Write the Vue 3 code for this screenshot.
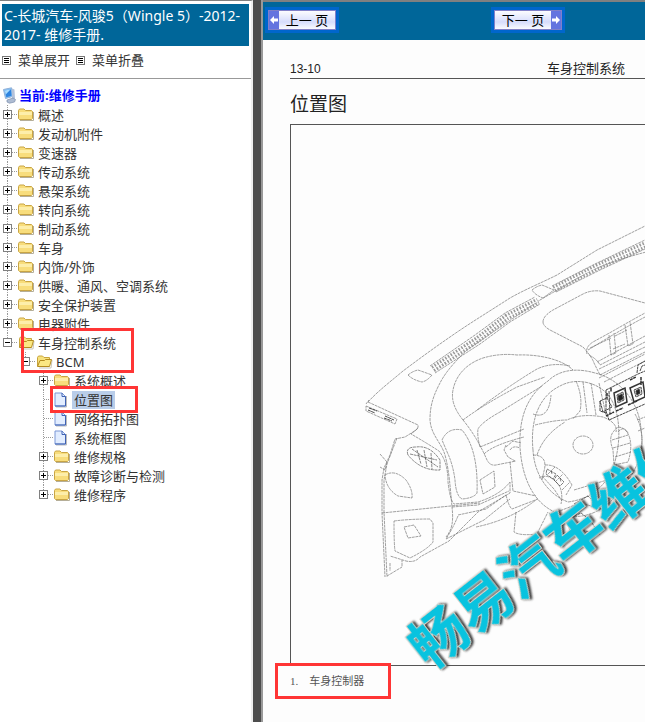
<script setup>
import { ref, computed } from 'vue'

const nodes = ref([
  ...['概述', '发动机附件', '变速器', '传动系统', '悬架系统', '转向系统', '制动系统', '车身', '内饰/外饰', '供暖、通风、空调系统', '安全保护装置', '电器附件']
    .map((label) => ({ label, depth: 0, kind: 'folder', open: false })),
  { label: '车身控制系统', depth: 0, kind: 'folder', open: true, last: true, mark: 'group' },
  { label: 'BCM', depth: 1, kind: 'folder', open: true, last: true },
  { label: '系统概述', depth: 2, kind: 'folder', open: false },
  { label: '位置图', depth: 2, kind: 'page', mark: 'item' },
  { label: '网络拓扑图', depth: 2, kind: 'page' },
  { label: '系统框图', depth: 2, kind: 'page' },
  { label: '维修规格', depth: 2, kind: 'folder', open: false },
  { label: '故障诊断与检测', depth: 2, kind: 'folder', open: false },
  { label: '维修程序', depth: 2, kind: 'folder', open: false, last: true },
])
const selected = ref('位置图')

const visible = computed(() => {
  let limit = Infinity
  return nodes.value.filter((n, i) => {
    if (n.depth > limit) return false
    const next = nodes.value[i + 1]
    limit = !n.open && next && next.depth > n.depth ? n.depth : Infinity
    return true
  })
})
function setAll(open) {
  nodes.value.forEach((n, i) => {
    const next = nodes.value[i + 1]
    if (next && next.depth > n.depth) n.open = open
  })
}
function toggle(n) {
  n.open = !n.open
}
</script>

<template>
  <div class="frames">
    <nav class="side">
      <h1 class="title">C-长城汽车-风骏5（Wingle 5）-2012-2017- 维修手册.</h1>
      <div class="tools">
        <button type="button" class="tool" @click="setAll(true)">
          <svg width="9" height="9" viewBox="0 0 9 9"><rect x=".5" y=".5" width="8" height="8" fill="#fff" stroke="#777" /><path d="M2 2.5h5M2 4.5h5M2 6.5h5" stroke="#000" /></svg>
          <span>菜单展开</span>
        </button>
        <button type="button" class="tool" @click="setAll(false)">
          <svg width="9" height="9" viewBox="0 0 9 9"><rect x=".5" y=".5" width="8" height="8" fill="#fff" stroke="#777" /><path d="M2 2.5h5M2 4.5h5M2 6.5h5" stroke="#000" /></svg>
          <span>菜单折叠</span>
        </button>
      </div>
      <div class="tree">
        <a class="root" href="#">
          <svg width="15" height="17" viewBox="0 0 15 17">
            <path d="M1.500 2.500L9.500 .8L10.500 9.500L3.500 11.500Z" fill="#8cc4f4" stroke="#8fb0d8" />
            <path d="M2.800 3.500L8.800 2.200L9.600 8.800L4.300 10.200Z" fill="#2d84e0" />
            <path d="M2.800 3.500L8.800 2.200L3.700 7.500Z" fill="#a9dcff" />
            <path d="M10 1.500l2.500 1 .5 9-3 1.500z" fill="#b4c2da" />
            <path d="M5 13l6-2 2.500 1.500-1 2.500-5 1.200-2.500-1.200z" fill="#aebcd2" stroke="#7d8fae" stroke-width=".7" />
          </svg>
          <span>当前:维修手册</span>
        </a>
        <ul class="rows">
          <li v-for="n in visible" :key="n.label" class="row" :class="'depth' + n.depth">
            <button v-if="n.kind === 'folder'" type="button" class="toggle" :aria-label="n.label" @click="toggle(n)">
              <svg width="18" height="19" viewBox="0 0 18 19">
                <path :d="n.last ? 'M7.500 0V9' : 'M7.500 0V19'" stroke="#999" stroke-dasharray="1 1" />
                <path d="M12 9.500H18" stroke="#999" stroke-dasharray="1 1" />
                <rect x="3.500" y="5.500" width="8" height="8" fill="#fff" stroke="#808080" />
                <path :d="n.open ? 'M5 9.500H10' : 'M5 9.500H10M7.500 7V12'" stroke="#000" />
              </svg>
            </button>
            <svg v-else width="18" height="19" viewBox="0 0 18 19">
              <path d="M7.500 0V19M8 9.500H18" fill="none" stroke="#999" stroke-dasharray="1 1" />
            </svg>
            <svg v-if="n.kind === 'page'" class="icon" width="18" height="17" viewBox="0 0 18 17">
              <path d="M2 16h10.500V5" fill="none" stroke="#bbb" />
              <path d="M1 2H8L11.500 5.500V15H1Z" fill="#e2edff" stroke="#7a97d6" />
              <path d="M8 2V5.500H11.500V15H1" fill="none" stroke="#3f62b4" />
            </svg>
            <svg v-else-if="n.open" class="icon" width="18" height="17" viewBox="0 0 18 17">
              <path d="M3 15h12l1-8" fill="none" stroke="#c9c5b8" />
              <path d="M1.500 13V4.500L2.500 3H6.500L8 4.500H13.500V7" fill="#f7e27e" stroke="#c8a43c" />
              <path d="M1.500 13.500L4 7.500H8.500L9.500 6.500H15.500L13.500 13.500Z" fill="#fbe883" stroke="#b48c20" />
            </svg>
            <svg v-else class="icon" width="18" height="17" viewBox="0 0 18 17">
              <path d="M2 14.500h13.500V6" fill="none" stroke="#b5ae98" />
              <path d="M.500 12.500V4.500L1.500 3H6L7.500 4.500H13.500L14.500 5.500V12.500L13.500 13.500H1.500Z" fill="#f8dd7c" stroke="#c9a544" />
              <path d="M1 6H14V9H1Z" fill="#fdeeaa" />
            </svg>
            <a href="#" class="label" :class="{ on: selected === n.label }" @click.prevent="selected = n.label">{{ n.label }}</a>
            <i v-if="n.mark" class="mark" :class="n.mark"></i>
          </li>
        </ul>
      </div>
    </nav>
    <div class="splitter"></div>
    <main class="doc">
      <div class="bar">
        <button type="button" class="pager">
          <svg width="10" height="18" viewBox="0 0 10 18"><rect width="10" height="18" fill="#6474df" /><path d="M1 9L5 5V7.500H9V10.500H5V13Z" fill="#fff" /></svg>
          <span>上一 页</span>
        </button>
        <button type="button" class="pager next">
          <span>下一 页</span>
          <svg width="10" height="18" viewBox="0 0 10 18"><rect width="10" height="18" fill="#6474df" /><path d="M9 9L5 5V7.500H1V10.500H5V13Z" fill="#fff" /></svg>
        </button>
      </div>
      <article class="sheet">
        <header class="running"><span>13-10</span><span>车身控制系统</span></header>
        <h2>位置图</h2>
        <figure>
          <svg class="drawing" width="354" height="540" viewBox="291 125 354 540">
            <g fill="none" stroke="#777" stroke-width=".7" stroke-dasharray="3 .7">
              <!-- dash top and defroster vents -->
              <path d="M368 402C378 391 390 382 403 371C419 359 434 348 450 337C470 323 490 311 510 298C526 289 541 283 557 275L597 250L645 226" />
              <path d="M646 252C620 259 606 264 590 271L540 300L493 332C475 345 465 350 460 357C449 368 443 377 440 383C432 398 430 408 430 420C431 435 441 442 445 455C449 470 450 485 452 507C454 524 451 531 446 537" />
              <path d="M408 375Q413 371 418 370L432 375Q427 381 422 382Q413 380 408 375M532 290Q537 286 542 285L554 290L543 298Q535 295 532 290" />
              <path d="M430 366L475 335L505 313L535 297M435 373L480 344L510 322L540 304M552 286L595 264L645 240M556 292L600 270L645 249" />
              <path d="M433 369L477 340L507 317L538 301M554 289L597 267L645 245" stroke="#999" stroke-width="7" stroke-dasharray="1.500 1.700" />
              <path d="M433 369L477 340L507 317L538 301M554 289L597 267L645 245" stroke="#fff" stroke-width="1" stroke-dasharray="none" />
              <!-- display and radio recess -->
              <path d="M543 322Q543 316 553 310L583 294Q591 290 600 291L645 303M543 322Q543 326 550 330L583 347Q592 357 594 363L600 375" />
              <path d="M587 354Q585 347 593 342L613 331Q632 320 645 313M588 350L611 336Q630 325 645 317M589 355Q597 359 600 365L645 342M597 362L645 336M599 369L645 347M600 375L645 352M609 335L611 355L616 353L614 333M625 325L628 346L633 344L630 322M613 349L625 344" />
              <path d="M590 348L611 338M615 336L627 330M599 378L645 354M604 382L645 361" />
              <!-- instrument hood -->
              <path d="M463 420Q450 404 453 390C456 374 468 363 483 358Q500 353 517 355C540 354 563 360 573 370M463 420Q477 437 487 460Q490 466 496 465L516 461M477 410Q510 385 537 369Q552 362 570 366M463 420Q483 405 517 387L545 377M480 447Q477 436 478 429Q482 422 500 412L542 386M480 447L524 429M484 454Q493 445 524 437M506 445L504 450L508 457L515 461M506 447L513 441L521 443M510 450Q513 445 520 448M510 462L513 491L536 496" />
              <!-- steering wheel -->
              <path d="M520 447C519 419 526 396 548 381C560 369 578 368 595 373C621 379 640 404 641 430C645 453 635 474 621 489C605 514 578 522 557 513C534 504 522 479 520 447Z" />
              <path d="M533 450C530 420 539 396 560 386C576 377 598 382 609 396C620 411 622 439 614 465C606 487 590 499 568 502C545 493 534 471 533 450Z" />
              <path d="M535 425Q555 420 567 420Q582 413 603 417Q618 423 616 432M537 455C542 440 552 430 565 422M533 414Q549 420 551 395M576 381Q583 397 580 411L573 419M583 382L587 413M591 383L596 415M599 383L606 415" />
              <ellipse cx="583" cy="445" rx="10" ry="9" />
              <path d="M533 455C543 455 547 461 544 471L542 480M539 478Q550 472 560 487Q563 495 561 504M542 476L554 489L562 501M545 465Q560 464 572 485L566 495M548 474L555 467M555 482L563 474M562 490L570 482M557 512L580 503L606 510M574 490L617 477" />
              <path d="M547 469l9 5-3 5-7-5ZM557 475l7 7-4 4-6-6ZM551 471l1 3M560 478l1 4" stroke="#444" />
              <!-- console on the right -->
              <path d="M613 450Q608 437 614 431Q619 423 627 432Q634 443 628 462L614 465ZM612 440L628 435M613 448L630 443M615 457L631 452M618 432Q624 425 628 433M637 420L645 417M638 431L645 428M635 414Q648 437 637 466" />
              <!-- driver side trim -->
              <path d="M368 402L418 425Q419 429 413 432L405 437L395 439L390 455L384 468L382 480L382 513L385 577M397 438L387 464L384 480L384 512L387 577M366 406L397 419L395 424L366 411ZM380 454L387 462L385 470L380 467M418 428L411 434Q425 442 439 451Q448 462 448 482Q450 500 454 504L478 502Q500 495 510 482V493L478 512L449 541L420 557Q415 563 406 561L390 556" />
              <path d="M442 440Q448 427 462 430C473 443 478 464 477 493Q474 498 462 499Q456 496 455 480Q453 465 448 454ZM452 507L478 505L509 491M382 513L480 503M480 480L494 471L495 487L483 494ZM385 475Q395 469 406 480Q413 490 412 498L398 496Q386 489 385 475" />
              <path d="M394 521Q410 519 430 519L433 523V542Q428 549 410 558L395 551Q394 544 394 521M404 527L414 525L421 536L408 538ZM458 515L486 509L506 495M458 516Q453 528 446 539L484 520L510 499M476 527Q510 520 536 500M506 495Q509 507 512 509L538 499M516 512L514 532Q520 536 537 534L548 512M387 576L402 567V560M390 563V571M366 404L369 400" />
              <!-- side vent -->
              <path d="M408 455Q405 447 416 447Q430 445 440 460L440 470Q421 471 408 455Z" stroke="#555" />
              <path d="M410 454L437 460M412 449L438 467M417 450L421 464M424 450L427 467M431 453L432 469" stroke="#555" />
              <!-- steering column lower cover -->
              <path d="M549 513L561 522L581 513L590 520L600 535M563 514L570 530L597 532M574 504L588 496L603 511M600 499L615 495M604 501L613 508" stroke="#333" />
            </g>
            <g fill="none" stroke="#333" stroke-width=".9" stroke-dasharray="3 .5">
              <path d="M369 408l8 3M368 410l7 3M385 416l9 4M384 418l8 3" />
              <path d="M606 390L638 374L645 371M606 390V411L609 420L645 404M609 391L610 414M600 401L607 398L612 407L603 412ZM600 401V411L606 413M637 373L638 365L645 361M640 371L642 366L645 365" />
              <path d="M614 393L625 388L627 402L616 407ZM630 388L643 382L645 397L634 402Z" stroke-width="1.500" stroke-dasharray="none" />
              <path d="M617 395l6-3 1 8-6 3zM634 390l7-3 1 7-6 3z" fill="#ddd" />
              <path d="M618 396l4-2 1 5-4 2zM636 391l3-2 1 4-3 2z" fill="#222" />
              <path d="M607 393v5M611 388v4M628 405l9-4M616 411l7-3M606 416l8-4M641 377v8M630 380l6-3" stroke-width="1.500" />
            </g>
            <text class="watermark" transform="translate(429 671) rotate(-38)">畅易汽车维修</text>
          </svg>
        </figure>
        <p class="caption"><span>1.</span><span>车身控制器</span><i class="mark note"></i></p>
      </article>
    </main>
  </div>
</template>

<style>
body { margin: 0; background: #fff; }
</style>

<style scoped>
.frames {
  display: flex;
  min-height: 100vh;
  overflow: hidden;
  font: 13px/19px "Noto Sans", "Noto Sans CJK SC", sans-serif;
  color: #333;
}
button { padding: 0; border: 0; background: none; font: inherit; color: inherit; cursor: pointer; }
a { color: inherit; text-decoration: none; }
svg { display: block; flex: none; }
.side {
  box-sizing: border-box;
  flex: 0 0 253px;
  border-top: 1px solid #808080;
  border-right: 2px solid #eee;
  padding-top: 3px;
}
.title {
  margin: 0 2px;
  padding: 2px 0 2px 2px;
  background: #069;
  color: #fff;
  font-size: 14px;
  font-weight: 400;
  line-height: 19px;
}
.tools {
  display: flex;
  gap: 6px;
  padding: 5px 2px 8px;
  border-bottom: 1px solid #999;
}
.tool { display: flex; align-items: center; gap: 7px; line-height: 19px; }
.tree { padding-top: 7px; }
.root {
  display: flex;
  align-items: center;
  gap: 2px;
  padding-left: 2px;
  height: 19px;
  color: #00f;
  font-weight: 700;
}
.rows { margin: 0; padding: 0; list-style: none; }
.row { position: relative; display: flex; align-items: center; height: 19px; white-space: nowrap; }
.depth1 { padding-left: 18px; }
.depth2 { padding-left: 36px; }
.toggle { display: block; }
.label { padding: 0 2px; line-height: 18px; }
.on { background: #b9cde9; }
.mark { position: absolute; box-sizing: border-box; border: 3px solid #ff3535; pointer-events: none; z-index: 1; }
.group { left: 21px; top: -5px; width: 113px; height: 45px; }
.item { left: 50px; top: -4px; width: 88px; height: 27px; }
.splitter {
  box-sizing: border-box;
  flex: 0 0 10px;
  background: #4d4d4d;
  border-right: 2px solid #999;
}
.doc { flex: 1; min-width: 0; border-top: 2px solid #808080; background: #fdfdfd; }
.bar {
  display: flex;
  align-items: flex-start;
  gap: 152px;
  box-sizing: border-box;
  height: 38px;
  padding: 5px 2px;
  background: #069;
}
.pager {
  display: flex;
  align-items: center;
  justify-content: space-between;
  box-sizing: content-box;
  width: 66px;
  height: 18px;
  padding: 1px;
  border: 3px solid #06c;
  background: linear-gradient(#fff, #d6dcfc 60%, #fff) padding-box;
  box-shadow: inset 0 0 0 1px #8080c8;
  color: #000;
  font-size: 13px;
  font-weight: 400;
  line-height: 18px;
}
.pager span { flex: 1; text-align: center; }
.sheet { padding: 20px 0 0 27px; }
.running {
  display: grid;
  grid-template-columns: 257px 1fr;
  height: 18px;
  border-bottom: 1px solid #555;
  font: 12px/18px "Liberation Sans", "Noto Sans CJK SC", sans-serif;
  color: #222;
}
.running span + span { font-size: 13px; }
h2 { margin: 0; font-size: 19px; font-weight: 400; line-height: 51px; height: 45px; color: #222; }
figure { margin: 0; border: solid #555; border-width: 1px 0 1px 1px; }
.drawing { overflow: visible; }
.watermark {
  font: 700 57px "Noto Sans CJK SC", sans-serif;
  fill: #08c3df;
  stroke: #d6d3ca;
  stroke-width: 2px;
  paint-order: stroke;
  filter: drop-shadow(2px 1px 1px #333);
}
.caption {
  position: relative;
  display: flex;
  gap: 11px;
  margin: 0;
  padding: 6px 0;
  font: 11px/19px "Liberation Serif", "Noto Sans CJK SC", serif;
  color: #555;
}
.note { left: -15px; top: -3px; width: 116px; height: 36px; }
</style>
